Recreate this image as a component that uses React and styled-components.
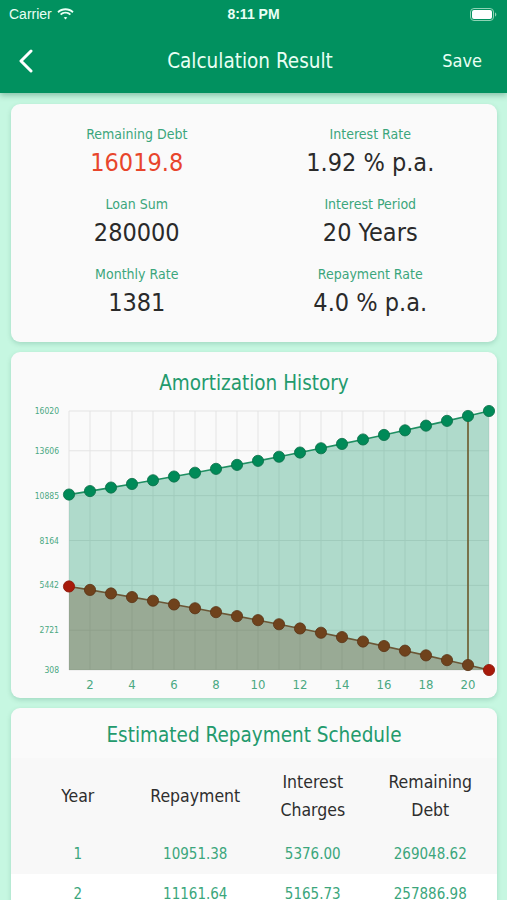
import React from "react";
import styled, { createGlobalStyle } from "styled-components";

const FONT = `"DejaVu Sans Condensed", "Liberation Sans", sans-serif`;

const Global = createGlobalStyle`
  html, body { margin: 0; padding: 0; background: #c6f7e1; }
  body { font-family: ${FONT}; }
  * { box-sizing: border-box; }
`;

const Page = styled.div`
  width: 507px;
  height: 900px;
  background: #c6f7e1;
  overflow: hidden;
`;

const TopBar = styled.div`
  background: #01915f;
  color: #fff;
  box-shadow: 0 2px 6px rgba(0, 80, 50, 0.35);
  position: relative;
  z-index: 1;
`;

const StatusBar = styled.div`
  height: 28px;
  display: grid;
  grid-template-columns: 1fr auto 1fr;
  align-items: center;
  padding: 0 9px;
  font-family: "Liberation Sans", Arial, sans-serif;
  font-size: 14px;
  color: #eafff5;
`;

const Carrier = styled.div`
  display: flex;
  align-items: center;
  gap: 5px;
`;

const Clock = styled.div`
  font-weight: bold;
  font-size: 14px;
`;

const Battery = styled.div`
  justify-self: end;
  display: flex;
  align-items: center;
  margin-right: 1px;
`;

const NavBar = styled.div`
  height: 65px;
  display: grid;
  grid-template-columns: 80px 1fr 80px;
  align-items: center;
  padding: 0 25px 0 18px;
`;

const NavTitle = styled.div`
  text-align: center;
  font-size: 20.5px;
  color: #e9fff4;
`;

const NavAction = styled.div`
  text-align: right;
  font-size: 18px;
  color: #e9fff4;
`;

const Content = styled.div`
  display: flex;
  flex-direction: column;
  gap: 10px;
  padding: 11px 10px 0 11px;
`;

const Card = styled.div`
  background: #fafafa;
  border-radius: 9px;
  box-shadow: 0 2px 5px rgba(0, 90, 60, 0.18);
  overflow: hidden;
`;

const SummaryGrid = styled.div`
  display: grid;
  grid-template-columns: 1fr 1fr;
  row-gap: 12px;
  padding: 19px 10px 21px 9px;
`;

const Stat = styled.div`
  display: flex;
  flex-direction: column;
  align-items: center;
`;

const StatLabel = styled.div`
  font-size: 14px;
  line-height: 22px;
  color: #3ba67c;
`;

const StatValue = styled.div`
  font-size: 25px;
  line-height: 36px;
  color: ${(p) => (p.$alert ? "#e8452b" : "#2a2a2a")};
`;

const CardTitle = styled.div`
  text-align: center;
  font-size: 20.5px;
  line-height: 26px;
  color: #239a6d;
  padding: ${(p) => p.$pad || "18px 0 5px"};
`;

const ChartSvg = styled.svg`
  display: block;
`;

const Table = styled.div`
  display: flex;
  flex-direction: column;
`;

const Row = styled.div`
  display: grid;
  grid-template-columns: repeat(4, 1fr);
  align-items: center;
  padding: 0 8px;
  min-height: ${(p) => (p.$head ? "76px" : "40px")};
  background: ${(p) => (p.$alt ? "#ffffff" : "#f8f8f8")};
`;

const HeadCell = styled.div`
  text-align: center;
  font-size: 17.5px;
  line-height: 28px;
  color: #2e2e2e;
`;

const Cell = styled.div`
  text-align: center;
  font-size: 15px;
  color: #3ba67c;
`;

// ---- data ----
const A = 16327.38;
const series = [];
let debt = 280000;
for (let y = 1; y <= 21; y++) {
  const interest = debt * 0.0192;
  const repay = A - interest;
  debt = debt - repay;
  series.push({ y, repay, interest });
}

const tableRows = [
  ["1", "10951.38", "5376.00", "269048.62"],
  ["2", "11161.64", "5165.73", "257886.98"],
];

const W = 486;
const H = 297;
const X0 = 58;
const STEP = 21;
const YTOP = 10;
const YBOT = 269;
const VMIN = 308;
const VMAX = 16020;
const sx = (i) => X0 + i * STEP;
const sy = (v) => YBOT - ((v - VMIN) / (VMAX - VMIN)) * (YBOT - YTOP);
const yLabels = [16020, 13606, 10885, 8164, 5442, 2721, 308];

function Chart() {
  const up = series.map((r, i) => [sx(i), sy(r.repay)]);
  const lo = series.map((r, i) => [sx(i), sy(r.interest)]);
  const line = (pts) => pts.map((p, i) => `${i ? "L" : "M"}${p[0].toFixed(1)},${p[1].toFixed(1)}`).join(" ");
  const area = (pts) => `${line(pts)} L${pts[pts.length - 1][0]},${YBOT} L${pts[0][0]},${YBOT} Z`;
  const hx = sx(19);
  return (
    <ChartSvg width={W} height={H} viewBox={`0 0 ${W} ${H}`}>
      {series.map((r, i) => (
        <line key={"v" + i} x1={sx(i)} x2={sx(i)} y1={YTOP} y2={YBOT} stroke="#e4e4e4" strokeWidth="1" />
      ))}
      {yLabels.map((v) => (
        <line key={"h" + v} x1={X0} x2={sx(20)} y1={sy(v)} y2={sy(v)} stroke="#e4e4e4" strokeWidth="1" />
      ))}
      <path d={area(up)} fill="#03925f" fillOpacity="0.3" />
      <path d={area(lo)} fill="#6e4a28" fillOpacity="0.33" />
      <line x1={hx} x2={hx} y1={up[19][1]} y2={lo[19][1]} stroke="#6c5a2c" strokeWidth="1.6" />
      <path d={line(up)} fill="none" stroke="#1f8f62" strokeWidth="1.6" />
      <path d={line(lo)} fill="none" stroke="#6b5736" strokeWidth="1.6" />
      {up.map((p, i) => (
        <circle key={"u" + i} cx={p[0]} cy={p[1]} r="5.6" fill="#008a58" stroke="#0a6e47" strokeWidth="0.8" />
      ))}
      {lo.map((p, i) => {
        const red = i === 0 || i === lo.length - 1;
        return (
          <circle
            key={"l" + i}
            cx={p[0]}
            cy={p[1]}
            r="5.6"
            fill={red ? "#a71a0a" : "#6f421c"}
            stroke={red ? "#8a1508" : "#5a3516"}
            strokeWidth="0.8"
          />
        );
      })}
      {yLabels.map((v) => (
        <text key={"t" + v} x="48" y={sy(v) + 3} textAnchor="end" fontSize="8.5" fill="#4aa882" fontFamily={FONT}>
          {v}
        </text>
      ))}
      {[2, 4, 6, 8, 10, 12, 14, 16, 18, 20].map((n) => (
        <text key={"x" + n} x={sx(n - 1)} y="288" textAnchor="middle" fontSize="13" fill="#4aa882" fontFamily={FONT}>
          {n}
        </text>
      ))}
    </ChartSvg>
  );
}

const stats = [
  ["Remaining Debt", "16019.8", true],
  ["Interest Rate", "1.92 % p.a."],
  ["Loan Sum", "280000"],
  ["Interest Period", "20 Years"],
  ["Monthly Rate", "1381"],
  ["Repayment Rate", "4.0 % p.a."],
];

export default function App() {
  return (
    <Page>
      <Global />
      <TopBar>
        <StatusBar>
          <Carrier>
            Carrier
            <svg width="17" height="12" viewBox="0 0 17 12">
              <path d="M8.5 2.2c2.6 0 5 1 6.8 2.7l1.3-1.3C14.4 1.4 11.6.3 8.5.3S2.6 1.4.4 3.6l1.3 1.3C3.5 3.2 5.9 2.2 8.5 2.2z" fill="#eafff5" />
              <path d="M8.5 5.6c1.6 0 3.1.6 4.2 1.7L14 6c-1.5-1.4-3.4-2.3-5.5-2.3S4.5 4.6 3 6l1.3 1.3C5.4 6.2 6.9 5.6 8.5 5.6z" fill="#eafff5" />
              <path d="M8.5 8.9c.7 0 1.3.3 1.8.7L8.5 11.5 6.7 9.6c.5-.4 1.1-.7 1.8-.7z" fill="#eafff5" />
            </svg>
          </Carrier>
          <Clock>8:11 PM</Clock>
          <Battery>
            <svg width="27" height="13" viewBox="0 0 27 13">
              <rect x="0.5" y="0.5" width="23" height="12" rx="3.5" fill="none" stroke="#8fd3b5" strokeWidth="1" />
              <rect x="2" y="2" width="20" height="9" rx="2" fill="#ffffff" />
              <path d="M25 4.5v4c.8-.3 1.3-1.1 1.3-2s-.5-1.7-1.3-2z" fill="#8fd3b5" />
            </svg>
          </Battery>
        </StatusBar>
        <NavBar>
          <svg width="16" height="24" viewBox="0 0 16 24">
            <path d="M13 2 L3 12 L13 22" fill="none" stroke="#ffffff" strokeWidth="3" strokeLinecap="round" strokeLinejoin="round" />
          </svg>
          <NavTitle>Calculation Result</NavTitle>
          <NavAction>Save</NavAction>
        </NavBar>
      </TopBar>
      <Content>
        <Card>
          <SummaryGrid>
            {stats.map(([l, v, alert]) => (
              <Stat key={l}>
                <StatLabel>{l}</StatLabel>
                <StatValue $alert={alert}>{v}</StatValue>
              </Stat>
            ))}
          </SummaryGrid>
        </Card>
        <Card>
          <CardTitle>Amortization History</CardTitle>
          <Chart />
        </Card>
        <Card>
          <CardTitle $pad="14px 0 10px">Estimated Repayment Schedule</CardTitle>
          <Table>
            <Row $head>
              <HeadCell>Year</HeadCell>
              <HeadCell>Repayment</HeadCell>
              <HeadCell>
                Interest
                <br />
                Charges
              </HeadCell>
              <HeadCell>
                Remaining
                <br />
                Debt
              </HeadCell>
            </Row>
            {tableRows.map((r, i) => (
              <Row key={r[0]} $alt={i % 2 === 1}>
                {r.map((c, j) => (
                  <Cell key={j}>{c}</Cell>
                ))}
              </Row>
            ))}
          </Table>
        </Card>
      </Content>
    </Page>
  );
}
